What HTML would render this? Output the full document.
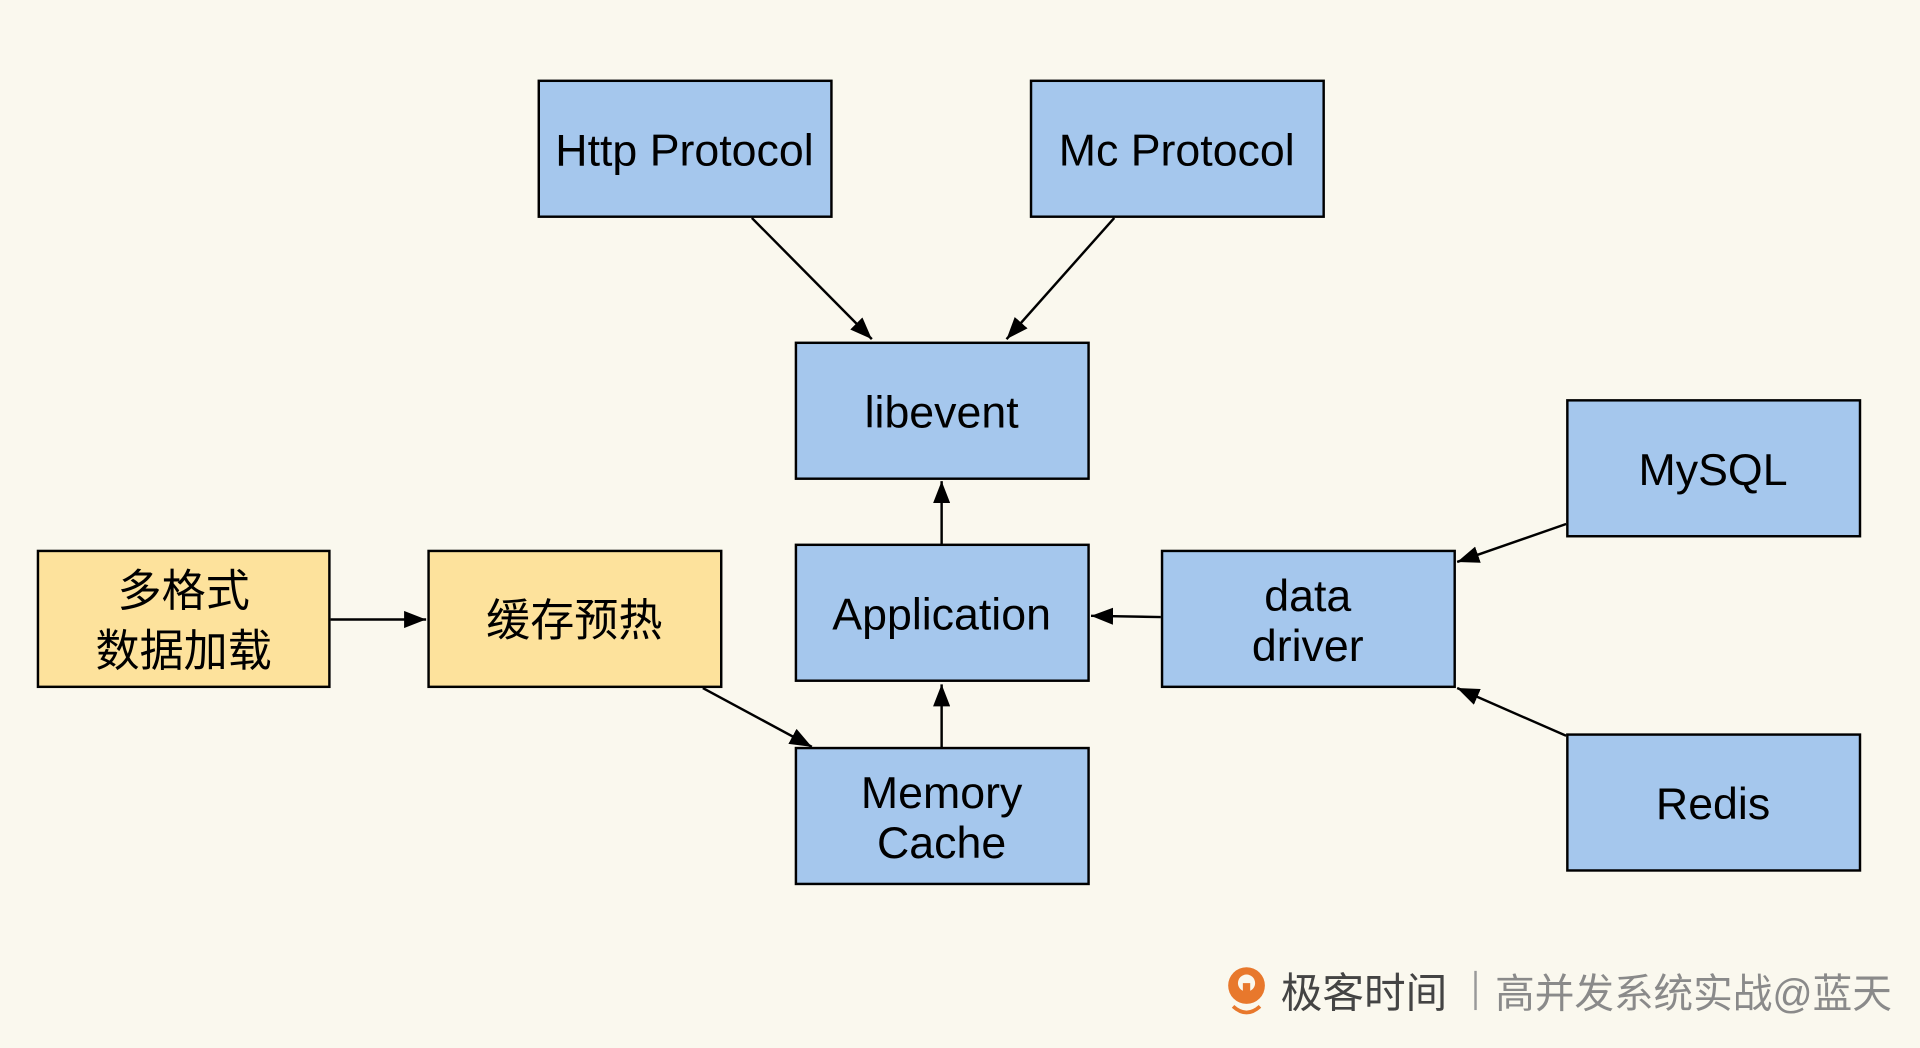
<!DOCTYPE html>
<html><head><meta charset="utf-8"><style>
html,body{margin:0;padding:0;background:#faf8ee;}
svg{display:block;}
text{font-family:"Liberation Sans","Noto Sans CJK SC",sans-serif;fill:#000;}
</style></head><body>
<svg width="1920" height="1048" viewBox="0 0 1568 856" preserveAspectRatio="none" xmlns="http://www.w3.org/2000/svg">
<defs>
<marker id="b" viewBox="0 0 18 14" refX="18" refY="7" markerWidth="18" markerHeight="14" orient="auto" markerUnits="userSpaceOnUse"><path d="M0,0 L18,7 L0,14z"/></marker></defs>
<rect width="1568" height="856" fill="#faf8ee"/>
<g stroke="#000" stroke-width="2">
<rect x="440" y="66" width="239" height="111" fill="#a5c7ed"/>
<rect x="842" y="66" width="239" height="111" fill="#a5c7ed"/>
<rect x="650" y="280" width="239" height="111" fill="#a5c7ed"/>
<rect x="1280" y="327" width="239" height="111" fill="#a5c7ed"/>
<rect x="31" y="450" width="238" height="111" fill="#fde29c"/>
<rect x="350" y="450" width="239" height="111" fill="#fde29c"/>
<rect x="650" y="445" width="239" height="111" fill="#a5c7ed"/>
<rect x="949" y="450" width="239" height="111" fill="#a5c7ed"/>
<rect x="650" y="611" width="239" height="111" fill="#a5c7ed"/>
<rect x="1280" y="600" width="239" height="111" fill="#a5c7ed"/>
</g>
<g stroke="#000" stroke-width="2" fill="none" marker-end="url(#b)">
<line x1="614" y1="178" x2="712" y2="277"/>
<line x1="910" y1="178" x2="822" y2="277"/>
<line x1="769" y1="445" x2="769" y2="393"/>
<line x1="769" y1="611" x2="769" y2="559"/>
<line x1="948" y1="504" x2="891" y2="503"/>
<line x1="1279" y1="428" x2="1190" y2="459"/>
<line x1="1279" y1="601" x2="1190" y2="562"/>
<line x1="270" y1="506" x2="348" y2="506"/>
<line x1="574" y1="562" x2="663" y2="610"/>
</g>
<g font-size="36.5" text-anchor="middle">
<text x="559" y="135">Http Protocol</text>
<text x="961" y="135">Mc Protocol</text>
<text x="769" y="349">libevent</text>
<text x="1399" y="396">MySQL</text>
<text x="769" y="514">Application</text>
<text x="1068" y="499">data</text>
<text x="1068" y="540">driver</text>
<text x="769" y="660">Memory</text>
<text x="769" y="701">Cache</text>
<text x="1399" y="669">Redis</text>
</g>
<g font-size="36" text-anchor="middle">
<text x="150" y="495">多格式</text>
<text x="150" y="544">数据加载</text>
<text x="469" y="519">缓存预热</text>
</g>
<g>
<circle cx="1018" cy="805" r="15" fill="#e8782c"/>
<circle cx="1018" cy="803" r="7" fill="#faf8ee"/>
<rect x="1015" y="803" width="6" height="16" fill="#e8782c"/>
<path d="M1007,822 Q1018,832 1029,822" stroke="#e8782c" stroke-width="3" fill="none"/>
<text x="1046" y="823" font-size="34" style="fill:#444">极客时间</text>
<rect x="1204" y="793" width="2" height="32" fill="#999"/>
<text x="1221" y="823" font-size="33" textLength="324" lengthAdjust="spacingAndGlyphs" style="fill:#8a8a8a">高并发系统实战@蓝天</text>
</g>
</svg>
</body></html>
